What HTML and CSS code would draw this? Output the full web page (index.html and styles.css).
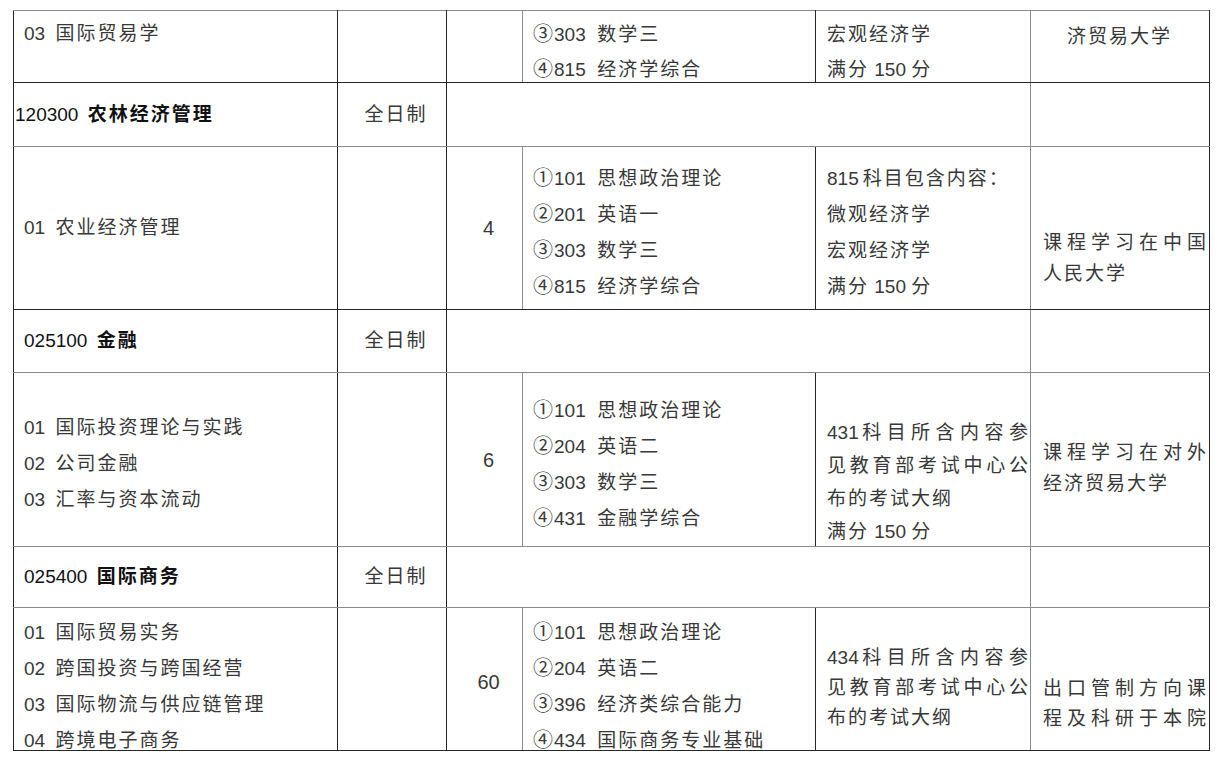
FILE: index.html
```html
<!DOCTYPE html>
<html lang="zh-CN">
<head>
<meta charset="utf-8">
<title>招生专业目录</title>
<link rel="stylesheet" href="styles.css">
</head>
<body>
<table class="catalog">
  <colgroup>
    <col class="w-name"><col class="w-mode"><col class="w-count"><col class="w-subj"><col class="w-note"><col class="w-remark">
  </colgroup>
  <tbody>
    <tr class="r1 gray-top">
      <td class="name top pt5"><span class="n">03</span> 国际贸易学</td>
      <td></td>
      <td class="count"></td>
      <td class="subj top">
        <div class="fit fit-r1">
          <div><span class="c">③</span><span class="n">303</span>&ensp;数学三</div>
          <div><span class="c">④</span><span class="n">815</span>&ensp;经济学综合</div>
        </div>
      </td>
      <td class="note top">
        <div class="fit fit-r1">
          <div>宏观经济学</div>
          <div>满分<span class="n"> 150 </span>分</div>
        </div>
      </td>
      <td class="remark center top pt8">济贸易大学</td>
    </tr>
    <tr class="r2 gray-bottom">
      <td class="major flush"><span class="n">120300</span> <b>农林经济管理</b></td>
      <td class="mode">全日制</td>
      <td class="span-mid" colspan="3"></td>
      <td class="remark"></td>
    </tr>
    <tr class="r3">
      <td class="name"><span class="n">01</span> 农业经济管理</td>
      <td></td>
      <td class="count"><span class="n">4</span></td>
      <td class="subj pt10">
        <div><span class="c">①</span><span class="n">101</span>&ensp;思想政治理论</div>
        <div><span class="c">②</span><span class="n">201</span>&ensp;英语一</div>
        <div><span class="c">③</span><span class="n">303</span>&ensp;数学三</div>
        <div><span class="c">④</span><span class="n">815</span>&ensp;经济学综合</div>
      </td>
      <td class="note pt10">
        <div><span class="n gap">815</span>科目包含内容：</div>
        <div>微观经济学</div>
        <div>宏观经济学</div>
        <div>满分<span class="n"> 150 </span>分</div>
      </td>
      <td class="remark top pt80">
        <div class="j">课程学习在中国</div>
        <div>人民大学</div>
      </td>
    </tr>
    <tr class="r4 gray-bottom">
      <td class="major"><span class="n">025100</span> <b>金融</b></td>
      <td class="mode">全日制</td>
      <td class="span-mid" colspan="3"></td>
      <td class="remark"></td>
    </tr>
    <tr class="r5 gray-bottom">
      <td class="name pt8">
        <div><span class="n">01</span> 国际投资理论与实践</div>
        <div><span class="n">02</span> 公司金融</div>
        <div><span class="n">03</span> 汇率与资本流动</div>
      </td>
      <td></td>
      <td class="count"><span class="n">6</span></td>
      <td class="subj pt10">
        <div><span class="c">①</span><span class="n">101</span>&ensp;思想政治理论</div>
        <div><span class="c">②</span><span class="n">204</span>&ensp;英语二</div>
        <div><span class="c">③</span><span class="n">303</span>&ensp;数学三</div>
        <div><span class="c">④</span><span class="n">431</span>&ensp;金融学综合</div>
      </td>
      <td class="note top">
        <div class="fit fit-r5">
          <div class="j"><span class="n">431</span>科目所含内容参</div>
          <div class="j">见教育部考试中心公</div>
          <div>布的考试大纲</div>
          <div>满分<span class="n"> 150 </span>分</div>
        </div>
      </td>
      <td class="remark top pt64">
        <div class="j">课程学习在对外</div>
        <div>经济贸易大学</div>
      </td>
    </tr>
    <tr class="r6 gray-bottom">
      <td class="major"><span class="n">025400</span> <b>国际商务</b></td>
      <td class="mode">全日制</td>
      <td class="span-mid" colspan="3"></td>
      <td class="remark"></td>
    </tr>
    <tr class="r7">
      <td class="name top">
        <div class="fit fit-r7">
          <div><span class="n">01</span> 国际贸易实务</div>
          <div><span class="n">02</span> 跨国投资与跨国经营</div>
          <div><span class="n">03</span> 国际物流与供应链管理</div>
          <div><span class="n">04</span> 跨境电子商务</div>
        </div>
      </td>
      <td></td>
      <td class="count pt6"><span class="n">60</span></td>
      <td class="subj top">
        <div class="fit fit-r7">
          <div><span class="c">①</span><span class="n">101</span>&ensp;思想政治理论</div>
          <div><span class="c">②</span><span class="n">204</span>&ensp;英语二</div>
          <div><span class="c">③</span><span class="n">396</span>&ensp;经济类综合能力</div>
          <div><span class="c">④</span><span class="n">434</span>&ensp;国际商务专业基础</div>
        </div>
      </td>
      <td class="note top pt35 lh30">
        <div class="j"><span class="n">434</span>科目所含内容参</div>
        <div class="j">见教育部考试中心公</div>
        <div>布的考试大纲</div>
      </td>
      <td class="remark top pt66 lh30">
        <div class="j">出口管制方向课</div>
        <div class="j">程及科研于本院</div>
      </td>
    </tr>
  </tbody>
</table>
</body>
</html>
```

FILE: styles.css
```css
html, body {
  margin: 0;
  padding: 0;
  background: #ffffff;
}

body {
  font-family: "Liberation Sans", "Noto Sans CJK SC", sans-serif;
  color: #383838;
}

.catalog {
  margin: 10px 0 0 13px;
  border-collapse: collapse;
  table-layout: fixed;
  width: 1197px;
}

.w-name { width: 324px; }
.w-mode { width: 109px; }
.w-count { width: 76px; }
.w-subj { width: 293px; }
.w-note { width: 215px; }
.w-remark { width: 179px; }

.r1 { height: 72px; }
.r2 { height: 64px; }
.r3 { height: 163px; }
.r4 { height: 63px; }
.r5 { height: 174px; }
.r6 { height: 61px; }
.r7 { height: 143px; }

.catalog td {
  padding: 0;
  border: 1px solid #262626;
  vertical-align: middle;
  font-size: 19px;
  line-height: 36px;
  letter-spacing: 2px;
  white-space: nowrap;
  color: #383838;
  font-family: "Liberation Sans", "Noto Sans CJK SC", sans-serif;
}

.n {
  letter-spacing: 0;
  font-family: "Liberation Sans", sans-serif;
}
.n.gap { margin-right: 4px; }
.name .n { margin-right: 3px; }

.c {
  font-family: "Noto Sans CJK SC", sans-serif;
  font-size: 20px;
  line-height: 1;
  letter-spacing: 0;
  margin-right: 1px;
}

/* grid line colours */
.gray-top td { border-top-color: #8a8a8a; }
.gray-bottom td { border-bottom-color: #8a8a8a; }
.catalog td.count { border-right-color: #8a8a8a; }
.catalog td.note,
.catalog td.span-mid { border-right-color: #8a8a8a; }

.top { vertical-align: top !important; }

/* fixed-height content boxes so the rows keep the reference height */
.fit { box-sizing: border-box; }
.fit-r1 { height: 64px; padding-top: 6px; line-height: 35px; }
.fit-r5 { height: 170px; padding-top: 43px; line-height: 33px; }
.fit-r7 { height: 136px; padding-top: 7px; line-height: 36px; }

.name { padding-left: 10px !important; }
.catalog td.major { padding-left: 10px; color: #111; }
.catalog td.major.flush { padding-left: 1px; }
.major b { font-weight: 700; color: #111; margin-left: 2px; }

.mode {
  text-align: center;
  padding-left: 8px !important;
}

.count {
  text-align: center;
  padding-left: 8px !important;
  font-size: 20px !important;
}

.subj { padding-left: 10px !important; }
.note { padding-left: 11px !important; padding-right: 0 !important; }
.remark {
  padding-left: 12px !important;
  padding-right: 1px !important;
  line-height: 31px !important;
}
.remark.center {
  text-align: center;
  padding-left: 0 !important;
  line-height: 36px !important;
}

.j {
  text-align: justify;
  text-align-last: justify;
}

.lh30 { line-height: 30px !important; }

.pt5 { padding-top: 5px !important; }
.pt6 { padding-top: 6px !important; }
.pt8 { padding-top: 8px !important; }
.pt10 { padding-top: 10px !important; }
.pt35 { padding-top: 35px !important; }
.pt64 { padding-top: 64px !important; }
.pt66 { padding-top: 66px !important; }
.pt80 { padding-top: 80px !important; }
```
